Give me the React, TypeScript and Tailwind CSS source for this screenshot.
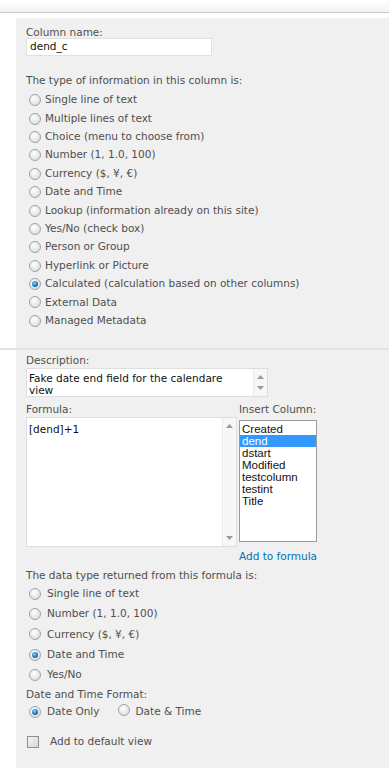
import React from 'react';

const Radio = ({ checked = false }: { checked?: boolean }) => (
  <span className="relative inline-flex h-[12px] w-[12px] shrink-0 items-center justify-center rounded-full border border-[#a3a3a3] bg-[radial-gradient(circle_at_40%_35%,#ffffff,#d4d4d4)]">
    {checked && (
      <span className="h-[6px] w-[6px] rounded-full bg-[radial-gradient(circle_at_40%_35%,#7fd0ff,#1673b8_60%,#0a3d6b)]" />
    )}
  </span>
);

const Arrow = ({ up }: { up?: boolean }) => (
  <svg width="7" height="4" viewBox="0 0 7 4">
    <path d={up ? 'M0 4 L3.5 0 L7 4 Z' : 'M0 0 L3.5 4 L7 0 Z'} fill="#9a9a9a" />
  </svg>
);

const Scroll = () => (
  <div className="flex w-[14px] flex-col items-center justify-between border-l border-[#ececec] bg-[#f7f7f7] py-[6px]">
    <Arrow up />
    <Arrow />
  </div>
);

const typeOptions = [
  'Single line of text',
  'Multiple lines of text',
  'Choice (menu to choose from)',
  'Number (1, 1.0, 100)',
  'Currency ($, ¥, €)',
  'Date and Time',
  'Lookup (information already on this site)',
  'Yes/No (check box)',
  'Person or Group',
  'Hyperlink or Picture',
  'Calculated (calculation based on other columns)',
  'External Data',
  'Managed Metadata',
];

const returnOptions = [
  'Single line of text',
  'Number (1, 1.0, 100)',
  'Currency ($, ¥, €)',
  'Date and Time',
  'Yes/No',
];

const columns = ['Created', 'dend', 'dstart', 'Modified', 'testcolumn', 'testint', 'Title'];

export default function App() {
  return (
    <div className="h-[768px] w-[389px] overflow-hidden bg-white font-['DejaVu_Sans',sans-serif] text-[10.5px] text-[#4f4f4f]">
      {/* top strip */}
      <div className="h-[13px] border-b border-[#c8c8c8] bg-gradient-to-b from-white to-[#f3f3f3]" />
      <div className="h-[5px]" />

      {/* column name + type */}
      <div className="flex">
        <div className="w-[16px] shrink-0" />
        <div className="h-[330px] flex-1 bg-[#f0f0f0] pl-[10px] pt-[8px]">
          <div className="h-[12px] leading-[12px]">Column name:</div>
          <div className="flex h-[18px] w-[186px] items-center border border-[#e1e1e1] bg-white pl-[3px] text-[#111]">
            dend_c
          </div>
          <div className="mt-[18px] h-[12px] leading-[12px]">The type of information in this column is:</div>
          <div className="mt-[5px]">
            {typeOptions.map((t, i) => (
              <div key={t} className="flex h-[18.4px] items-center pl-[3px]">
                <Radio checked={i === 10} />
                <span className="ml-[4px]">{t}</span>
              </div>
            ))}
          </div>
        </div>
      </div>

      <div className="h-[2px] bg-[#e2e2e2]" />

      {/* calculated settings */}
      <div className="flex">
        <div className="w-[16px] shrink-0" />
        <div className="h-[420px] flex-1 bg-[#f0f0f0] pl-[10px] pt-[4px]">
          <div className="h-[12px] leading-[12px]">Description:</div>
          <div className="mt-[2px] flex h-[29px] w-[242px] border border-[#dedede] bg-white">
            <div className="flex-1 pl-[2px] pr-[24px] pt-[3px] leading-[12px] text-[#111]">
              Fake date end field for the calendare view
            </div>
            <Scroll />
          </div>

          <div className="mt-[6px] flex">
            <div className="w-[213px]">
              <div className="h-[12px] leading-[12px]">Formula:</div>
              <div className="mt-[2px] flex h-[130px] w-[211px] border border-[#dedede] bg-white">
                <div className="flex-1 pl-[2px] pt-[5px] leading-[12px] text-[#111]">[dend]+1</div>
                <Scroll />
              </div>
            </div>
            <div className="w-[80px]">
              <div className="h-[12px] leading-[12px]">Insert Column:</div>
              <div className="mt-[5px] h-[122px] w-[78px] border border-[#9c9c9c] bg-white font-['Liberation_Sans',sans-serif] text-[11.5px] leading-[12px] text-[#111]">
                <div className="pt-[2px]">
                  {columns.map((c) => (
                    <div
                      key={c}
                      className={c === 'dend' ? 'h-[12px] bg-[#3399ff] pl-[2px] text-white' : 'h-[12px] pl-[2px]'}
                    >
                      {c}
                    </div>
                  ))}
                </div>
              </div>
              <div className="mt-[8px] h-[12px] leading-[12px] text-[#0072bc]">Add to formula</div>
            </div>
          </div>

          <div className="mt-[7px] h-[12px] leading-[12px]">The data type returned from this formula is:</div>
          <div className="mt-[3px]">
            {returnOptions.map((t, i) => (
              <div key={t} className="flex h-[20.2px] items-center pl-[3px]">
                <Radio checked={i === 3} />
                <span className="ml-[6px]">{t}</span>
              </div>
            ))}
          </div>
          <div className="mt-[3px] h-[12px] leading-[12px]">Date and Time Format:</div>
          <div className="mt-[3px] flex h-[18px] items-center pl-[3px]">
            <Radio checked />
            <span className="ml-[6px]">Date Only</span>
            <span className="ml-[18px]">
              <Radio />
            </span>
            <span className="ml-[6px]">Date &amp; Time</span>
          </div>
          <div className="mt-[15px] flex h-[12px] items-center pl-[1px]">
            <span className="h-[12px] w-[12px] border border-[#8e8e8e] bg-gradient-to-br from-[#f4f4f4] to-[#d6d6d6]" />
            <span className="ml-[11px]">Add to default view</span>
          </div>
        </div>
      </div>
    </div>
  );
}
